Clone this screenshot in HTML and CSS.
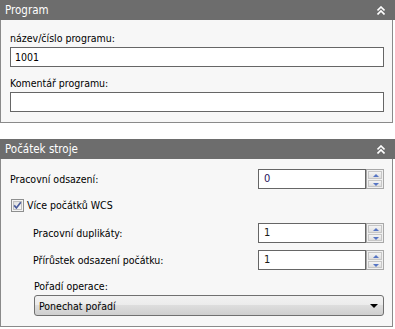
FILE: index.html
```html
<!DOCTYPE html>
<html lang="cs">
<head>
    <meta charset="UTF-8">
    <meta name="viewport" content="width=device-width, initial-scale=1.0">
    <title>Program</title>
    <link rel="stylesheet" href="styles.css">
</head>
<body>

<div class="panel">
    <div class="panel-header">
        <span>Program</span>
        <svg class="collapse" width="8" height="9" viewBox="0 0 8 9"><path d="M0.5 4.5L4 1L7.5 4.5M0.5 8.5L4 5L7.5 8.5" fill="none" stroke="#fff" stroke-width="1.6"/></svg>
    </div>
    <div class="panel-body">
        <div class="field-label">název/číslo programu:</div>
        <div class="text-input">1001</div>
        <div class="field-label next">Komentář programu:</div>
        <div class="text-input"></div>
    </div>
</div>

<div class="panel second">
    <div class="panel-header">
        <span>Počátek stroje</span>
        <svg class="collapse" width="8" height="9" viewBox="0 0 8 9"><path d="M0.5 4.5L4 1L7.5 4.5M0.5 8.5L4 5L7.5 8.5" fill="none" stroke="#fff" stroke-width="1.6"/></svg>
    </div>
    <div class="panel-body">
        <div class="spin-row">
            <span>Pracovní odsazení:</span>
            <div class="spinner">
                <div class="spin-value navy">0</div>
                <div class="spin-buttons"><i class="up"></i><i class="down"></i></div>
            </div>
        </div>
        <div class="check-row">
            <svg class="checkbox" width="13" height="13" viewBox="0 0 13 13">
                <defs>
                    <linearGradient id="cb" x1="0" y1="0" x2="1" y2="1">
                        <stop offset="0" stop-color="#dcdcdc"/>
                        <stop offset="1" stop-color="#fbfbfb"/>
                    </linearGradient>
                </defs>
                <rect x="0.5" y="0.5" width="12" height="12" fill="#f4f4f4" stroke="#8e8f8f"/>
                <rect x="2.5" y="2.5" width="8" height="8" fill="url(#cb)" stroke="#c0c0c0"/>
                <path d="M3.2 6.4L5.4 9L9.8 3.2" fill="none" stroke="#4a5c9c" stroke-width="1.7"/>
            </svg>
            <span>Více počátků WCS</span>
        </div>
        <div class="indent">
            <div class="spin-row">
                <span>Pracovní duplikáty:</span>
                <div class="spinner">
                    <div class="spin-value">1</div>
                    <div class="spin-buttons"><i class="up"></i><i class="down"></i></div>
                </div>
            </div>
            <div class="spin-row close">
                <span>Přírůstek odsazení počátku:</span>
                <div class="spinner">
                    <div class="spin-value">1</div>
                    <div class="spin-buttons"><i class="up"></i><i class="down"></i></div>
                </div>
            </div>
            <div class="field-label order">Pořadí operace:</div>
            <div class="dropdown">
                <span>Ponechat pořadí</span>
                <i class="caret"></i>
            </div>
        </div>
    </div>
</div>

</body>
</html>
```

FILE: styles.css
```css
body { margin: 0; background: #fff; font-family: "DejaVu Sans Condensed", "DejaVu Sans", sans-serif; font-size: 10.5px; color: #000; }
.panel { width: 395px; }
.panel.second { margin-top: 16px; }
.panel-header { height: 20px; background: #6d6d6d; color: #fff; font-size: 11.5px; display: flex; align-items: center; justify-content: space-between; padding: 0 10px 0 5px; box-sizing: border-box; }
.collapse { display: block; }
.panel-body { width: 393px; box-sizing: border-box; background: #f7f7f7; border: 1px solid #8a8a8a; border-top: none; padding: 10px 8px 10px 9px; }
.field-label { height: 16px; line-height: 16px; margin-bottom: 1px; }
.field-label.next { margin-top: 8px; }
.text-input { height: 20px; box-sizing: border-box; background: #fff; border: 1px solid #666; padding: 0 4px; line-height: 18px; }

.spin-row { display: flex; align-items: center; justify-content: space-between; height: 20px; }
.spinner { display: flex; width: 126px; height: 20px; }
.spin-value { flex: 1; box-sizing: border-box; background: #fff; border: 1px solid #666; padding: 0 5px; line-height: 18px; font-size: 11px; color: #1a1a1a; }
.spin-value.navy { color: #2a1560; }
.spin-buttons { width: 18px; box-sizing: border-box; border: 1px solid #a8a8a8; background: #f0f0f0; display: flex; flex-direction: column; padding: 1px; gap: 1px; }
.spin-buttons i { flex: 1; background: linear-gradient(#f4f4f4, #dedede); border: 1px solid #c6c6c6; position: relative; }
.spin-buttons i::after { content: ""; position: absolute; left: 4px; top: 2px; border-left: 3px solid transparent; border-right: 3px solid transparent; }
.spin-buttons i.up::after { border-bottom: 3px solid #5675c4; }
.spin-buttons i.down::after { border-top: 3px solid #5675c4; }

.check-row { display: flex; align-items: center; height: 16px; margin: 8px 0 0 1px; gap: 3px; }
.checkbox { display: block; }

.indent { padding-left: 23px; margin-top: 10px; }
.spin-row.close { margin-top: 7px; }
.field-label.order { margin-top: 8px; margin-left: 1px; }
.dropdown { height: 21px; box-sizing: border-box; margin-left: 1px; border: 1px solid #707070; border-radius: 3px; background: linear-gradient(#f2f2f2 0%, #ebebeb 50%, #dddddd 50%, #cfcfcf 100%); display: flex; align-items: center; justify-content: space-between; padding: 0 5px 0 4px; font-size: 10.5px; }
.caret { border-left: 4px solid transparent; border-right: 4px solid transparent; border-top: 4px solid #000; }
```
